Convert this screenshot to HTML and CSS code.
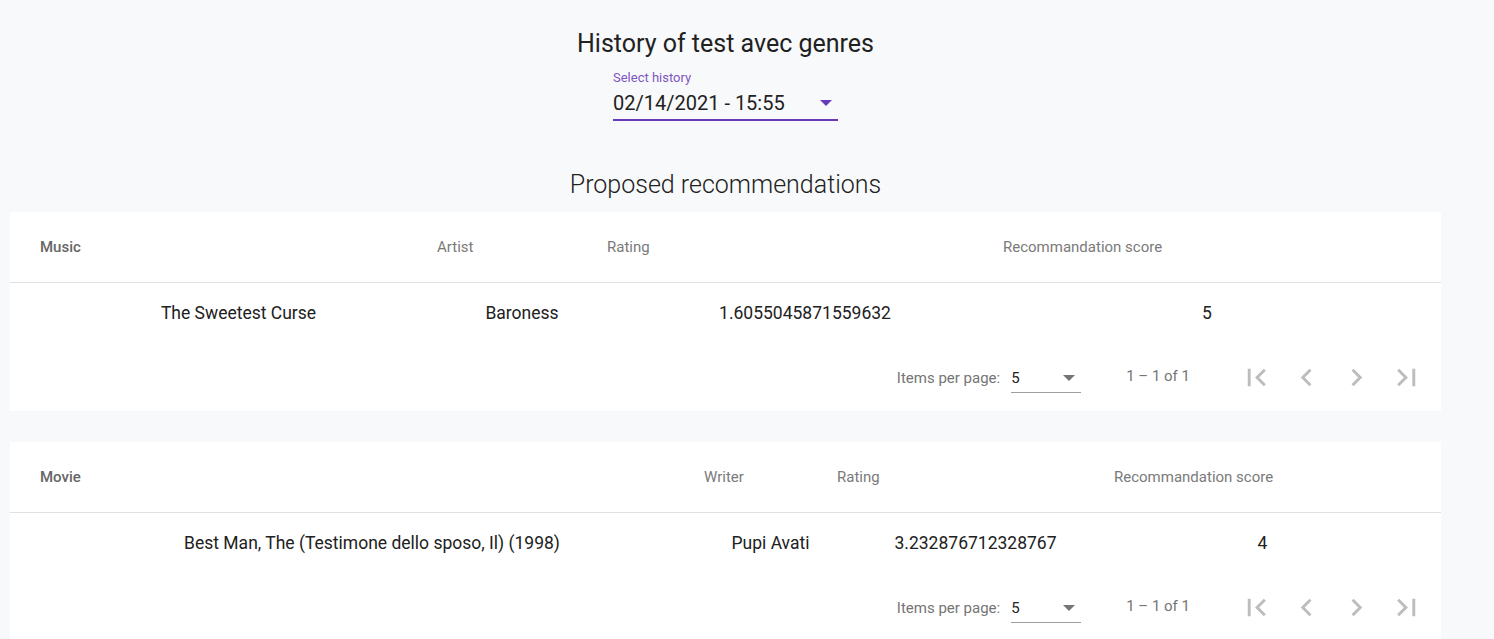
FILE: index.html
```html
<!DOCTYPE html>
<html>
<head>
<meta charset="utf-8">
<link rel="stylesheet" href="styles.css">
</head>
<body>
<main class="page">
  <header class="top">
    <h1 class="title">History of test avec genres</h1>
    <div class="field">
      <div class="field-label">Select history</div>
      <div class="field-value">
        <span>02/14/2021 - 15:55</span>
        <span class="arrow purple"></span>
      </div>
      <div class="field-line"></div>
    </div>
    <h2 class="subtitle">Proposed recommendations</h2>
  </header>

  <section class="card">
    <div class="grid grid-music head">
      <div class="hc first">Music</div>
      <div class="hc">Artist</div>
      <div class="hc">Rating</div>
      <div class="hc">Recommandation score</div>
    </div>
    <div class="grid grid-music row">
      <div class="dc">The Sweetest Curse</div>
      <div class="dc">Baroness</div>
      <div class="dc">1.6055045871559632</div>
      <div class="dc">5</div>
    </div>
    <div class="paginator">
      <span class="pg-label">Items per page:</span>
      <div class="pg-select"><span>5</span><span class="arrow grey"></span></div>
      <span class="pg-range">1 – 1 of 1</span>
      <div class="pg-btns">
        <button class="pg-btn"><svg viewBox="0 0 24 24"><path d="M18.41 16.59L13.82 12l4.59-4.59L17 6l-6 6 6 6zM6 6h2v12H6z"/></svg></button>
        <button class="pg-btn"><svg viewBox="0 0 24 24"><path d="M15.41 7.41L14 6l-6 6 6 6 1.41-1.41L10.83 12z"/></svg></button>
        <button class="pg-btn"><svg viewBox="0 0 24 24"><path d="M10 6L8.59 7.41 13.17 12l-4.58 4.59L10 18l6-6z"/></svg></button>
        <button class="pg-btn"><svg viewBox="0 0 24 24"><path d="M5.59 7.41L10.18 12l-4.59 4.59L7 18l6-6-6-6zM16 6h2v12h-2z"/></svg></button>
      </div>
    </div>
  </section>

  <section class="card card-second">
    <div class="grid grid-movie head">
      <div class="hc first">Movie</div>
      <div class="hc">Writer</div>
      <div class="hc">Rating</div>
      <div class="hc">Recommandation score</div>
    </div>
    <div class="grid grid-movie row">
      <div class="dc">Best Man, The (Testimone dello sposo, Il) (1998)</div>
      <div class="dc">Pupi Avati</div>
      <div class="dc">3.232876712328767</div>
      <div class="dc">4</div>
    </div>
    <div class="paginator">
      <span class="pg-label">Items per page:</span>
      <div class="pg-select"><span>5</span><span class="arrow grey"></span></div>
      <span class="pg-range">1 – 1 of 1</span>
      <div class="pg-btns">
        <button class="pg-btn"><svg viewBox="0 0 24 24"><path d="M18.41 16.59L13.82 12l4.59-4.59L17 6l-6 6 6 6zM6 6h2v12H6z"/></svg></button>
        <button class="pg-btn"><svg viewBox="0 0 24 24"><path d="M15.41 7.41L14 6l-6 6 6 6 1.41-1.41L10.83 12z"/></svg></button>
        <button class="pg-btn"><svg viewBox="0 0 24 24"><path d="M10 6L8.59 7.41 13.17 12l-4.58 4.59L10 18l6-6z"/></svg></button>
        <button class="pg-btn"><svg viewBox="0 0 24 24"><path d="M5.59 7.41L10.18 12l-4.59 4.59L7 18l6-6-6-6zM16 6h2v12h-2z"/></svg></button>
      </div>
    </div>
  </section>
</main>
</body>
</html>
```

FILE: styles.css
```css
html, body {
  margin: 0;
  padding: 0;
  background: #f8f9fa;
  font-family: Roboto, "Liberation Sans", sans-serif;
  color: #212121;
}

.page {
  width: 1431px;
  margin-left: 10px;
  padding-bottom: 20px;
}

.top {
  display: flex;
  flex-direction: column;
  align-items: center;
  padding-top: 24px;
}

.title {
  margin: 0;
  font-size: 25px;
  font-weight: 400;
  line-height: 40px;
  color: #212121;
}

.field {
  width: 225px;
  margin-top: 5px;
}

.field-label {
  font-size: 13px;
  line-height: 18px;
  color: #7e57c2;
}

.field-value {
  margin-top: 2px;
  height: 28px;
  display: flex;
  align-items: center;
  justify-content: space-between;
  font-size: 20px;
  line-height: 28px;
  color: #212121;
  padding-right: 6px;
}

.arrow {
  width: 0;
  height: 0;
  border-left: 6px solid transparent;
  border-right: 6px solid transparent;
  border-top: 6px solid #673ab7;
}

.arrow.grey {
  border-top-color: #757575;
}

.field-line {
  margin-top: 2px;
  height: 2px;
  background: #673ab7;
}

.subtitle {
  margin: 44px 0 0;
  font-size: 25px;
  font-weight: 300;
  line-height: 40px;
  color: #212121;
}

.card {
  margin-top: 7px;
  background: #ffffff;
}

.card-second {
  margin-top: 31px;
}

.grid {
  display: grid;
  padding: 0 30px;
}

.grid-music {
  grid-template-columns: 397px 170px 396px 1fr;
}

.grid-movie {
  grid-template-columns: 664px 133px 277px 1fr;
}

.head {
  height: 70px;
  border-bottom: 1px solid #e0e0e0;
  align-items: center;
}

.hc {
  font-size: 15px;
  color: #7a7a7a;
  font-weight: 400;
}

.hc.first {
  font-weight: 500;
  color: #666666;
}

.row {
  height: 60px;
  align-items: center;
}

.dc {
  font-size: 17.5px;
  text-align: center;
  color: #212121;
}

.paginator {
  height: 68px;
  display: flex;
  align-items: center;
  justify-content: flex-end;
  padding: 1px 10px 0 0;
  box-sizing: border-box;
  font-size: 15px;
  color: #757575;
}

.pg-label {
  line-height: 20px;
}

.pg-select {
  width: 70px;
  margin-left: 11px;
  margin-top: 6px;
  display: flex;
  justify-content: space-between;
  align-items: center;
  padding: 0 6px 4px 0;
  box-sizing: border-box;
  border-bottom: 1px solid #9e9e9e;
  color: #212121;
  line-height: 20px;
}

.pg-range {
  margin-left: 45px;
  margin-right: 41px;
  margin-top: -4px;
  line-height: 20px;
}

.pg-btns {
  display: flex;
}

.pg-btn {
  width: 50px;
  height: 50px;
  padding: 0;
  border: 0;
  background: transparent;
  display: flex;
  align-items: center;
  justify-content: center;
}

.pg-btn svg {
  width: 35px;
  height: 35px;
  fill: #bdbdbd;
}
```
